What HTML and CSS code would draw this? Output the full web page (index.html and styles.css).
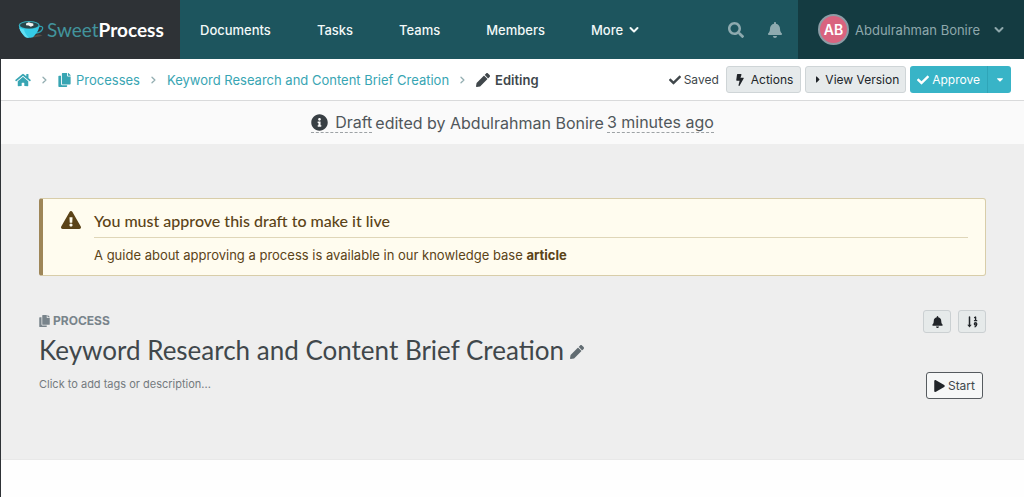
FILE: index.html
```html
<!DOCTYPE html>
<html lang="en">
<head>
<meta charset="utf-8">
<title>Keyword Research and Content Brief Creation</title>
<link rel="stylesheet" href="styles.css">
</head>
<body>
<svg class="sprite" aria-hidden="true">
  <symbol id="search" viewBox="0 0 512 512"><path d="M505 442.7L405.3 343c-4.5-4.5-10.6-7-17-7H372c27.6-35.3 44-79.7 44-128C416 93.1 322.9 0 208 0S0 93.1 0 208s93.1 208 208 208c48.3 0 92.7-16.4 128-44v16.3c0 6.4 2.5 12.5 7 17l99.7 99.7c9.4 9.4 24.6 9.4 33.9 0l28.3-28.3c9.4-9.4 9.4-24.6.1-34zM208 336c-70.7 0-128-57.2-128-128 0-70.7 57.2-128 128-128 70.7 0 128 57.2 128 128 0 70.7-57.2 128-128 128z"/></symbol>
  <symbol id="bell" viewBox="0 0 448 512"><path d="M224 512c35.32 0 63.97-28.65 63.97-64H160.03c0 35.35 28.65 64 63.97 64zm215.39-149.71c-19.32-20.76-55.47-51.99-55.47-154.29 0-77.7-54.48-139.9-127.94-155.16V32c0-17.67-14.32-32-31.98-32s-31.98 14.33-31.98 32v20.84C118.56 68.1 64.08 130.3 64.08 208c0 102.3-36.15 133.53-55.47 154.29-6 6.45-8.66 14.16-8.61 21.71.11 16.4 12.98 32 32.1 32h383.8c19.12 0 32-15.6 32.1-32 .05-7.55-2.61-15.27-8.61-21.71z"/></symbol>
  <symbol id="home" viewBox="0 0 576 512"><path d="M280.37 148.26L96 300.11V464a16 16 0 0 0 16 16l112.06-.29a16 16 0 0 0 15.92-16V368a16 16 0 0 1 16-16h64a16 16 0 0 1 16 16v95.64a16 16 0 0 0 16 16.05L464 480a16 16 0 0 0 16-16V300L295.67 148.26a12.19 12.19 0 0 0-15.3 0zM571.6 251.47L488 182.56V44.05a12 12 0 0 0-12-12h-56a12 12 0 0 0-12 12v72.61L318.47 43a48 48 0 0 0-61 0L4.34 251.47a12 12 0 0 0-1.6 16.9l25.5 31A12 12 0 0 0 45.15 301l235.22-193.74a12.19 12.19 0 0 1 15.3 0L530.9 301a12 12 0 0 0 16.9-1.6l25.5-31a12 12 0 0 0-1.7-16.93z"/></symbol>
  <symbol id="copy" viewBox="0 0 448 512"><path d="M320 448v40c0 13.255-10.745 24-24 24H24c-13.255 0-24-10.745-24-24V120c0-13.255 10.745-24 24-24h72v296c0 30.879 25.121 56 56 56h168zm0-344V0H152c-13.255 0-24 10.745-24 24v368c0 13.255 10.745 24 24 24h272c13.255 0 24-10.745 24-24V128H344c-13.2 0-24-10.8-24-24zm120.971-31.029L375.029 7.029A24 24 0 0 0 358.059 0H352v96h96v-6.059a24 24 0 0 0-7.029-16.97z"/></symbol>
  <symbol id="pencil" viewBox="0 0 512 512"><path d="M497.9 142.1l-46.1 46.1c-4.7 4.7-12.3 4.7-17 0l-111-111c-4.7-4.7-4.7-12.3 0-17l46.1-46.1c18.7-18.7 49.1-18.7 67.9 0l60.1 60.1c18.8 18.7 18.8 49.1 0 67.9zM284.2 99.8L21.6 362.4.4 483.9c-2.9 16.4 11.4 30.6 27.8 27.8l121.5-21.3 262.6-262.6c4.7-4.7 4.7-12.3 0-17l-111-111c-4.8-4.7-12.4-4.7-17.1 0z"/></symbol>
  <symbol id="check" viewBox="0 0 512 512"><path d="M173.898 439.404l-166.4-166.4c-9.997-9.997-9.997-26.206 0-36.204l36.203-36.204c9.997-9.998 26.207-9.998 36.204 0L192 312.69 432.095 72.596c9.997-9.997 26.207-9.997 36.204 0l36.203 36.204c9.997 9.997 9.997 26.206 0 36.204l-294.4 294.401c-9.998 9.997-26.207 9.997-36.204-.001z"/></symbol>
  <symbol id="bolt" viewBox="0 0 320 512"><path d="M296 160H180.6l42.6-129.8C227.2 15 215.7 0 200 0H56C44 0 33.8 8.9 32.2 20.8l-32 240C-1.7 275.2 9.5 288 24 288h118.7L96.6 482.5c-3.6 15.2 8 29.5 23.3 29.5 8.4 0 16.4-4.4 20.8-12l176-304c9.3-15.9-2.2-36-20.7-36z"/></symbol>
  <symbol id="play" viewBox="0 0 448 512"><path d="M424.4 214.7L72.4 6.6C43.8-10.3 0 6.1 0 47.9V464c0 37.5 40.7 60.1 72.4 41.3l352-208c31.4-18.5 31.5-64.1 0-82.6z"/></symbol>
  <symbol id="caret-right" viewBox="0 100 192 312"><path d="M0 384.662V127.338c0-17.818 21.543-26.741 34.142-14.142l128.662 128.662c7.81 7.81 7.81 20.474 0 28.284L34.142 398.804C21.543 411.404 0 402.48 0 384.662z"/></symbol>
  <symbol id="caret-down" viewBox="0 0 8 5"><path d="M.6 0h6.8c.5 0 .8.6.4 1L4.4 4.5a.6.6 0 0 1-.8 0L.2 1C-.2.6.1 0 .6 0z"/></symbol>
  <symbol id="chevron-down" viewBox="0 0 10 8"><path d="M1.5 2L5 5.5 8.500 2" fill="none" stroke="currentColor" stroke-width="2" stroke-linecap="round" stroke-linejoin="round"/></symbol>
  <symbol id="chevron-right" viewBox="0 0 5 8"><path d="M1 1.200L3.900 4 1 6.800" fill="none" stroke="currentColor" stroke-width="1.300" stroke-linecap="round" stroke-linejoin="round"/></symbol>
  <symbol id="warning" viewBox="0 0 576 512"><path d="M569.517 440.013C587.975 472.007 564.806 512 527.94 512H48.054c-36.937 0-59.999-40.055-41.577-71.987L246.423 23.985c18.467-32.009 64.72-31.951 83.154 0l239.94 416.028zM288 354c-25.405 0-46 20.595-46 46s20.595 46 46 46 46-20.595 46-46-20.595-46-46-46zm-43.673-165.346l7.418 136c.347 6.364 5.609 11.346 11.982 11.346h48.546c6.373 0 11.635-4.982 11.982-11.346l7.418-136c.375-6.874-5.098-12.654-11.982-12.654h-63.383c-6.884 0-12.356 5.78-11.981 12.654z"/></symbol>
  <symbol id="info" viewBox="0 0 512 512"><path d="M256 8C119.043 8 8 119.083 8 256c0 136.997 111.043 248 248 248s248-111.003 248-248C504 119.083 392.957 8 256 8zm0 110c23.196 0 42 18.804 42 42s-18.804 42-42 42-42-18.804-42-42 18.804-42 42-42zm56 254c0 6.627-5.373 12-12 12h-88c-6.627 0-12-5.373-12-12v-24c0-6.627 5.373-12 12-12h12v-64h-12c-6.627 0-12-5.373-12-12v-24c0-6.627 5.373-12 12-12h64c6.627 0 12 5.373 12 12v100h12c6.627 0 12 5.373 12 12v24z"/></symbol>
  <symbol id="sort" viewBox="0 0 11 12"><g fill="none" stroke="currentColor" stroke-linecap="round" stroke-linejoin="round"><path d="M2.500 1v8" stroke-width="1.500"/><path d="M7.600 1.600l1-.6v3.600M7.500 4.700h2.200" stroke-width="1.300"/><circle cx="8.500" cy="7.900" r="1.100" stroke-width="1.400"/><path d="M9.700 8c0 1.600-.6 2.500-1.700 2.800" stroke-width="1.300"/></g><path d="M.3 8.800h4.400L2.500 11.500z"/></symbol>
</svg>

<header class="topbar">
  <a class="brand" href="#">
    <svg class="brand-cup" viewBox="0 0 26 20" aria-hidden="true">
      <path d="M14 17.500c4-.2 8-1 10.500-2.300-1-.6-3-.8-5-.8l-4 2z" fill="#574b43"/>
      <path d="M21 6.700c3-.9 4.300.5 3.400 2.600-.9 2-3.100 3.500-6.400 3.700" fill="none" stroke="#2f9fae" stroke-width="1.300"/>
      <path d="M.8 5C1.200 10.500 4.500 14 7 16.800c1.500 1.400 7 1.400 8.500 0 2.500-2.800 5.600-6.300 6-11.800z" fill="#35cbe6"/>
      <path d="M1.300 8C2.500 12 5 14.600 7 16.800c.8.700 2.300 1 4 1C8 15 6.500 12 6 9.500z" fill="#62def2"/>
      <ellipse cx="11.200" cy="5" rx="10.400" ry="4" fill="#36a9b8"/>
      <ellipse cx="11.200" cy="5.300" rx="9.200" ry="3.200" fill="#29454a"/>
      <path d="M8 3.500l2.800-1.300 2 .8 2.400.6.300 1.800-2.700 1.300-2.200-1.200-2.500-.3z" fill="#f3f3ef"/>
    </svg>
    <span class="brand-name">Sweet<strong>Process</strong></span>
  </a>
  <nav class="mainnav">
    <a href="#">Documents</a>
    <a href="#">Tasks</a>
    <a href="#">Teams</a>
    <a href="#">Members</a>
    <button type="button" class="more">More <svg class="i-chev"><use href="#chevron-down"/></svg></button>
  </nav>
  <div class="tools">
    <button type="button" aria-label="Search"><svg class="i-search"><use href="#search"/></svg></button>
    <button type="button" aria-label="Notifications"><svg class="i-bell"><use href="#bell"/></svg></button>
  </div>
  <button type="button" class="account">
    <span class="avatar">AB</span>
    <span>Abdulrahman Bonire</span>
    <svg class="i-chev"><use href="#chevron-down"/></svg>
  </button>
</header>

<div class="subbar">
  <nav class="crumbs" aria-label="Breadcrumb">
    <a href="#" aria-label="Home"><svg class="i-home"><use href="#home"/></svg></a>
    <svg class="i-sep"><use href="#chevron-right"/></svg>
    <a href="#"><svg class="i-copy"><use href="#copy"/></svg>Processes</a>
    <svg class="i-sep"><use href="#chevron-right"/></svg>
    <a href="#">Keyword Research and Content Brief Creation</a>
    <svg class="i-sep"><use href="#chevron-right"/></svg>
    <span class="current"><svg class="i-md"><use href="#pencil"/></svg>Editing</span>
  </nav>
  <div class="actions">
    <span class="saved"><svg class="i-sm"><use href="#check"/></svg>Saved</span>
    <button type="button" class="btn btn-actions"><svg class="i-bolt"><use href="#bolt"/></svg>Actions</button>
    <button type="button" class="btn btn-view"><svg class="i-caret"><use href="#caret-right"/></svg>View Version</button>
    <div class="split">
      <button type="button" class="approve"><svg class="i-sm"><use href="#check"/></svg>Approve</button>
      <button type="button" class="approve-more" aria-label="More approval options"><svg class="i-down"><use href="#caret-down"/></svg></button>
    </div>
  </div>
</div>

<p class="draft"><span class="hint state"><svg class="i-info"><use href="#info"/></svg>Draft</span> edited by Abdulrahman Bonire <span class="hint">3 minutes ago</span></p>

<main class="content">
  <section class="notice">
    <svg class="i-warning"><use href="#warning"/></svg>
    <div class="notice-body">
      <h2>You must approve this draft to make it live</h2>
      <p>A guide about approving a process is available in our knowledge base <a href="#">article</a></p>
    </div>
  </section>
  <section class="process">
    <div class="process-info">
      <p class="kind"><svg class="i-kind"><use href="#copy"/></svg>PROCESS</p>
      <h1>Keyword Research and Content Brief Creation <button type="button" class="edit" aria-label="Edit title"><svg class="i-md"><use href="#pencil"/></svg></button></h1>
      <button type="button" class="describe">Click to add tags or description...</button>
    </div>
    <div class="process-tools">
      <div class="icon-buttons">
        <button type="button" class="btn-icon" aria-label="Alerts"><svg class="i-alert"><use href="#bell"/></svg></button>
        <button type="button" class="btn-icon" aria-label="Reorder"><svg class="i-sort"><use href="#sort"/></svg></button>
      </div>
      <button type="button" class="start"><svg class="i-play"><use href="#play"/></svg>Start</button>
    </div>
  </section>
</main>
</body>
</html>
```
FILE: styles.css
```css
* { box-sizing: border-box; }
html { background: #fefefe; }
body {
  margin: 0;
  min-height: 100vh;
  border-left: 1px solid #2e3236;
  color: #40474b;
  font: 13px/20px Inter, "Liberation Sans", sans-serif;
}
a { color: inherit; text-decoration: none; }
button { margin: 0; padding: 0; border: 0; background: none; color: inherit; font: inherit; cursor: pointer; }
svg { display: block; flex: none; fill: currentColor; }
h1, h2, p { margin: 0; }
.sprite { display: none; }

.i-chev { width: 10px; height: 8px; }
.i-search { width: 16px; height: 16px; }
.i-bell { width: 14px; height: 16px; }
.i-home { width: 16px; height: 14px; }
.i-copy { width: 13px; height: 14px; }
.i-kind { width: 11px; height: 12px; }
.i-sep { width: 5px; height: 8px; color: #93aeb1; }
.i-md { width: 14px; height: 14px; }
.i-sm { width: 12px; height: 12px; }
.i-bolt { width: 8px; height: 12px; }
.i-caret { width: 4px; height: 7px; }
.i-down { width: 6px; height: 4px; }
.i-info { width: 17px; height: 17px; }
.i-warning { width: 20px; height: 18px; }
.i-alert { width: 11px; height: 12px; }
.i-sort { width: 11px; height: 12px; }
.i-play { width: 11px; height: 12px; }

.topbar { display: flex; height: 59px; background: #1d555e; color: #f2f8f8; }
.brand { display: flex; align-items: center; gap: 3px; width: 179px; padding-left: 17px; background: #2e3236; }
.brand-cup { width: 26px; height: 20px; }
.brand-name { color: #42949c; font: 400 19px/24px Lato, sans-serif; }
.brand-name strong { color: #fff; font-weight: 700; }
.mainnav { display: flex; align-items: center; gap: 46px; flex: 1; padding-left: 20px; font-weight: 500; }
.more { display: flex; align-items: center; gap: 6px; }
.tools { display: flex; align-items: center; gap: 24px; padding-right: 16px; color: #8eaaaf; }
.account { display: flex; align-items: center; width: 226px; padding-left: 20px; background: #143b41; color: #8fa8ac; }
.avatar { width: 31px; height: 31px; margin-right: 6px; border: 2px solid #8d9ca5; border-radius: 50%; background: #d9637f; color: #fff; font-size: 14px; font-weight: 600; line-height: 27px; text-align: center; }
.account .i-chev { margin-left: auto; margin-right: 20px; }

.subbar { display: flex; align-items: center; justify-content: space-between; height: 42px; padding: 0 13px 0 14px; border-bottom: 1px solid #d9dadb; background: #fff; }
.crumbs { display: flex; align-items: center; gap: 11px; color: #38a5b3; }
.crumbs a, .current { display: flex; align-items: center; gap: 5px; }
.current { color: #40474b; font-weight: 600; }
.actions { display: flex; align-items: center; gap: 4px; font-size: 12px; }
.saved { display: flex; align-items: center; gap: 3px; margin-right: 3px; }
.btn { display: flex; align-items: center; justify-content: center; height: 27px; border: 1px solid #cfd5d7; border-radius: 3px; background: #e6eaeb; color: #212529; }
.btn-actions { gap: 7px; padding: 0 7px 0 9px; }
.btn-view { gap: 5px; padding: 0 6px 0 10px; }
.split { display: flex; height: 27px; overflow: hidden; border-radius: 3px; background: #38b4c7; color: #fff; }
.approve { display: flex; align-items: center; gap: 3px; padding: 0 7px; }
.approve-more { display: flex; align-items: center; justify-content: center; width: 24px; border-left: 1px solid #2fa5b8; }

.draft { display: flex; align-items: center; justify-content: center; gap: 3px; height: 43px; background: #fafafa; font-size: 16px; color: #50575b; }
.hint { border-bottom: 1px dashed #9da2a5; }
.state { display: flex; align-items: center; gap: 7px; }
.state svg { color: #383f44; }

.content { padding: 54px 38px 60px; background: #eee; border-bottom: 1px solid #e8e8e8; }
.notice { display: flex; gap: 13px; padding: 11px 17px 10px 18px; border: 1px solid #d8cda9; border-left: 4px solid #9e8658; border-radius: 3px; background: #fffcef; color: #5b4317; }
.i-warning { margin-top: 1px; }
.notice-body { flex: 1; }
.notice h2 { padding-bottom: 5px; border-bottom: 1px solid #dfd6b8; font: 500 16px/22px Lato, sans-serif; }
.notice p { padding-top: 7px; }
.notice a { font-weight: 700; }
.process { display: flex; justify-content: space-between; padding-top: 34px; }
.kind { display: flex; align-items: center; gap: 3px; height: 22px; color: #79848b; font-size: 12px; font-weight: 700; }
.process h1 { display: flex; align-items: center; gap: 6px; color: #40474b; font: 400 26px/36px Lato, sans-serif; }
.edit { padding-top: 4px; color: #626c72; }
.describe { display: block; margin-top: 6px; color: #747a7e; font-size: 11px; }
.process-tools { display: flex; flex-direction: column; align-items: flex-end; gap: 39px; }
.icon-buttons { display: flex; gap: 7px; }
.btn-icon { display: flex; align-items: center; justify-content: center; width: 28px; height: 23px; border: 1px solid #cbd0d2; border-radius: 3px; background: #e6eaea; color: #212529; }
.start { display: flex; align-items: center; gap: 3px; height: 27px; margin-right: 3px; padding: 0 7px; border: 1px solid #565b5f; border-radius: 3px; background: #f6f7f7; font-size: 12px; }
.start svg { color: #212529; }
```
